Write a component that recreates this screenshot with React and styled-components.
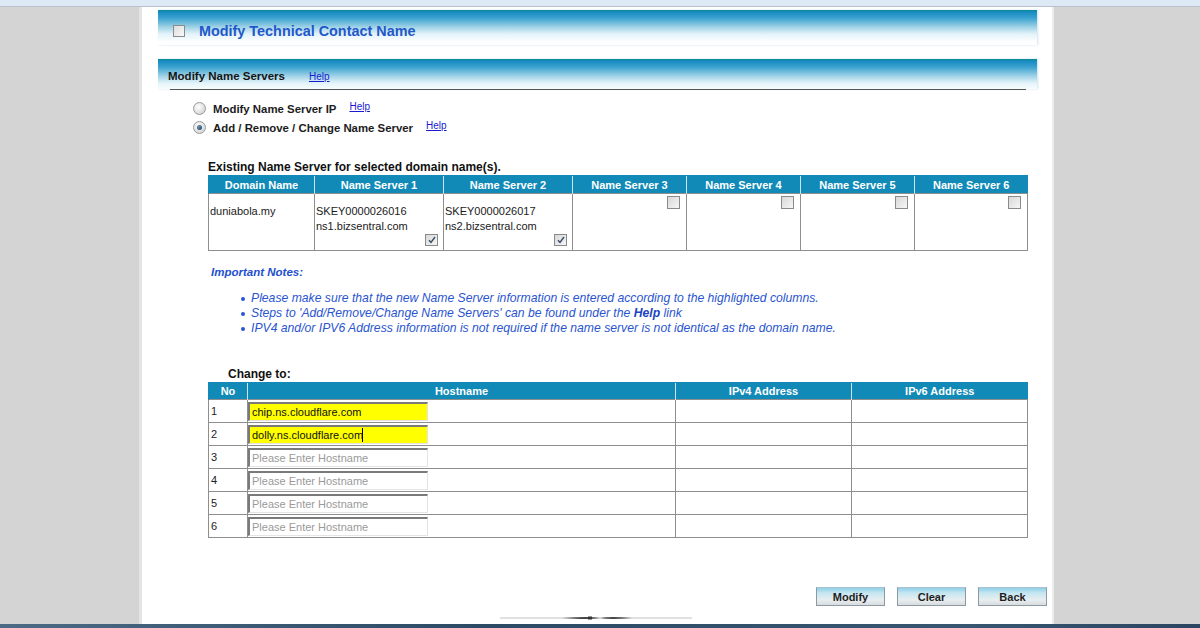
import styled, { createGlobalStyle } from "styled-components"

const GlobalStyle = createGlobalStyle`
  html, body {
    margin: 0;
    padding: 0;
    background: #d4d4d4;
    font-family: "Liberation Sans", Arial, sans-serif;
    font-size: 11px;
    color: #111;
  }
`

const existing = [
  { domain: "duniabola.my" },
]

const nsCols = [
  { title: "Name Server 1", lines: ["SKEY0000026016", "ns1.bizsentral.com"], checked: true },
  { title: "Name Server 2", lines: ["SKEY0000026017", "ns2.bizsentral.com"], checked: true },
  { title: "Name Server 3" },
  { title: "Name Server 4" },
  { title: "Name Server 5" },
  { title: "Name Server 6" },
]

const hosts = [
  { no: 1, value: "chip.ns.cloudflare.com" },
  { no: 2, value: "dolly.ns.cloudflare.com", caret: true },
  { no: 3 },
  { no: 4 },
  { no: 5 },
  { no: 6 },
]

function CheckMark() {
  return (
    <svg width="8" height="8" viewBox="0 0 8 8">
      <path d="M1 4.2 L3 6.5 L7 1" fill="none" stroke="#3a4a6a" strokeWidth="1.4" />
    </svg>
  )
}

function DecoLine() {
  return (
    <svg width="192" height="6" viewBox="0 0 192 6">
      <line x1="0" y1="3" x2="192" y2="3" stroke="#9a9a9a" strokeWidth="0.6" />
      <path d="M62 3 Q90 1.6 100 3 Q90 4.4 62 3 Z" fill="#111" />
      <path d="M100 3 Q110 1.6 132 3 Q110 4.4 100 3 Z" fill="#111" />
      <rect x="88" y="1.5" width="4" height="3" fill="#333" />
    </svg>
  )
}

export default function App() {
  return (
    <>
      <GlobalStyle />
      <TopStrip />
      <Main>
        <Side fixed />
        <Page>
          <Band1>
            <BoxCheck />
            <BandTitle>Modify Technical Contact Name</BandTitle>
          </Band1>
          <Band2>
            <SectionTitle>Modify Name Servers</SectionTitle>
            <HelpLink href="#">Help</HelpLink>
          </Band2>
          <Rule />

          <RadioGroup>
            <RadioRow>
              <Radio />
              <RadioLabel>Modify Name Server IP</RadioLabel>
              <HelpLink href="#" raised>Help</HelpLink>
            </RadioRow>
            <RadioRow>
              <Radio selected />
              <RadioLabel>Add / Remove / Change Name Server</RadioLabel>
              <HelpLink href="#" raised>Help</HelpLink>
            </RadioRow>
          </RadioGroup>

          <Content>
            <Caption>Existing Name Server for selected domain name(s).</Caption>
            <Grid>
              <colgroup>
                <col style={{ width: 106 }} />
                <col style={{ width: 129 }} />
                <col style={{ width: 129 }} />
                <col style={{ width: 114 }} />
                <col style={{ width: 114 }} />
                <col style={{ width: 114 }} />
                <col style={{ width: 113 }} />
              </colgroup>
              <thead>
                <tr>
                  <Th>Domain Name</Th>
                  {nsCols.map(c => (
                    <Th key={c.title}>{c.title}</Th>
                  ))}
                </tr>
              </thead>
              <tbody>
                {existing.map(row => (
                  <tr key={row.domain}>
                    <ServerCell>
                      <CellStack>
                        <div>{row.domain}</div>
                      </CellStack>
                    </ServerCell>
                    {nsCols.map(c => (
                      <ServerCell key={c.title}>
                        <CellStack>
                          {c.lines ? c.lines.map(l => <div key={l}>{l}</div>) : null}
                          <TickBox atBottom={!!c.lines}>{c.checked ? <CheckMark /> : null}</TickBox>
                        </CellStack>
                      </ServerCell>
                    ))}
                  </tr>
                ))}
              </tbody>
            </Grid>

            <NotesTitle>Important Notes:</NotesTitle>
            <Notes>
              <li>Please make sure that the new Name Server information is entered according to the highlighted columns.</li>
              <li>
                Steps to 'Add/Remove/Change Name Servers' can be found under the <b>Help</b> link
              </li>
              <li>IPV4 and/or IPV6 Address information is not required if the name server is not identical as the domain name.</li>
            </Notes>

            <ChangeTitle>Change to:</ChangeTitle>
            <Grid>
              <colgroup>
                <col style={{ width: 39 }} />
                <col style={{ width: 428 }} />
                <col style={{ width: 176 }} />
                <col style={{ width: 176 }} />
              </colgroup>
              <thead>
                <tr>
                  <Th compact>No</Th>
                  <Th compact>Hostname</Th>
                  <Th compact>IPv4 Address</Th>
                  <Th compact>IPv6 Address</Th>
                </tr>
              </thead>
              <tbody>
                {hosts.map(h => (
                  <tr key={h.no}>
                    <HostCell>{h.no}</HostCell>
                    <HostCell flush>
                      <InputWrap>
                        <HostInput
                          readOnly
                          filled={!!h.value}
                          value={h.value || ""}
                          placeholder="Please Enter Hostname"
                        />
                        {h.caret ? <Caret /> : null}
                      </InputWrap>
                    </HostCell>
                    <HostCell />
                    <HostCell />
                  </tr>
                ))}
              </tbody>
            </Grid>
          </Content>

          <Actions>
            <ActionButton>Modify</ActionButton>
            <ActionButton>Clear</ActionButton>
            <ActionButton>Back</ActionButton>
          </Actions>
          <Deco>
            <DecoLine />
          </Deco>
        </Page>
        <Side />
      </Main>
      <BottomStrip />
    </>
  )
}

const TopStrip = styled.div`
  height: 6px;
  background: #dde9f4;
  border-bottom: 1px solid #b8c2cc;
`

const Main = styled.div`
  display: flex;
  height: 617px;
`

const Side = styled.div`
  flex: ${({ fixed }) => (fixed ? "0 0 139px" : "1")};
  background: #d4d4d4;
`

const Page = styled.div`
  width: 910px;
  flex: none;
  background: #fff;
  border-left: 3px solid #e4e4e4;
  border-right: 2px solid #ececec;
  display: flex;
  flex-direction: column;
`

const BottomStrip = styled.div`
  height: 4px;
  background: linear-gradient(90deg, #4c6a86, #2c4a66 40%, #385672 80%, #2a4560);
`

const bandGradient = `
  linear-gradient(
    180deg,
    #0c8a8e 0px,
    #178bc2 2px,
    #3aa2cf 8px,
    #9fd2e6 17px,
    #e3f3f9 24px,
    #ffffff 32px
  )
`

const Band1 = styled.div`
  margin: 3px 15px 0 16px;
  height: 35px;
  background: ${bandGradient};
  display: flex;
  align-items: center;
  padding: 6px 0 0 15px;
  box-sizing: border-box;
  box-shadow: 1px 0 2px rgba(60, 140, 180, 0.25);
`

const BoxCheck = styled.span`
  width: 10px;
  height: 10px;
  border: 1px solid #8b8b8b;
  background: linear-gradient(135deg, #dcdcdc, #fafafa);
`

const BandTitle = styled.span`
  margin-left: 14px;
  font-size: 14.4px;
  font-weight: bold;
  color: #1f58c9;
`

const Band2 = styled.div`
  margin: 14px 15px 0 16px;
  height: 30px;
  background: ${bandGradient};
  display: flex;
  align-items: center;
  padding: 4px 0 0 10px;
  box-sizing: border-box;
  box-shadow: 1px 0 2px rgba(60, 140, 180, 0.25);
`

const SectionTitle = styled.span`
  font-size: 11.5px;
  font-weight: bold;
  color: #151515;
  margin-right: 24px;
`

const HelpLink = styled.a`
  font-size: 10px;
  color: #1a1ad0;
  text-decoration: underline;
  margin-left: ${({ raised }) => (raised ? "13px" : "0")};
  position: relative;
  top: ${({ raised }) => (raised ? "-2px" : "0")};
`

const Rule = styled.div`
  height: 1px;
  margin: 0 26px 0 28px;
  background: #555;
`

const RadioGroup = styled.div`
  margin: 9px 0 0 51px;
  display: flex;
  flex-direction: column;
`

const RadioRow = styled.div`
  height: 19px;
  display: flex;
  align-items: center;
`

const Radio = styled.span`
  width: 11px;
  height: 11px;
  border-radius: 50%;
  border: 1px solid #9a9a9a;
  background: radial-gradient(circle at 40% 35%, #ffffff, #d4d4d4 80%);
  position: relative;

  &::after {
    content: "";
    display: ${({ selected }) => (selected ? "block" : "none")};
    position: absolute;
    left: 3px;
    top: 3px;
    width: 5px;
    height: 5px;
    border-radius: 50%;
    background: radial-gradient(circle at 35% 35%, #6a8fb0, #1c3b5c);
  }
`

const RadioLabel = styled.span`
  margin-left: 7px;
  font-size: 11.4px;
  font-weight: bold;
  color: #1c1c1c;
`

const Content = styled.div`
  margin-left: 66px;
  width: 819px;
`

const Caption = styled.div`
  margin-top: 23px;
  line-height: 14px;
  font-size: 12px;
  font-weight: bold;
  color: #111;
  margin-bottom: 1px;
`

const Grid = styled.table`
  width: 819px;
  table-layout: fixed;
  border-collapse: collapse;
`

const Th = styled.th`
  height: ${({ compact }) => (compact ? "16px" : "17px")};
  padding: 0;
  background: #128ab8;
  color: #fff;
  font-size: 11px;
  font-weight: bold;
  text-align: center;
  border-left: 1px solid #c6e6f2;
  border-top: 1px solid #128ab8;

  &:first-child {
    border-left: 1px solid #128ab8;
  }
`

const ServerCell = styled.td`
  height: 56px;
  padding: 0;
  border: 1px solid #8e8e8e;
  vertical-align: top;
  font-size: 11px;
  line-height: 15px;
  color: #1a1a1a;
`

const CellStack = styled.div`
  height: 56px;
  padding: 2px 5px 4px 1px;
  box-sizing: border-box;
  display: flex;
  flex-direction: column;

  & > div:first-child {
    margin-top: 8px;
  }
`

const TickBox = styled.span`
  width: 11px;
  height: 11px;
  border: 1px solid #8a8a8a;
  background: linear-gradient(135deg, #d8d8d8, #f6f6f6);
  align-self: flex-end;
  display: flex;
  align-items: center;
  justify-content: center;
  margin-top: ${({ atBottom }) => (atBottom ? "auto" : "0")};
  margin-right: ${({ atBottom }) => (atBottom ? "0" : "1px")};
`

const NotesTitle = styled.div`
  margin: 14px 0 0 3px;
  line-height: 14px;
  font-size: 11.5px;
  font-weight: bold;
  font-style: italic;
  color: #2250cf;
`

const Notes = styled.ul`
  margin: 12px 0 0 0;
  padding: 0 0 0 43px;
  list-style: none;
  font-size: 12.2px;
  font-style: italic;
  line-height: 15px;
  color: #2a55d0;

  li {
    position: relative;
  }

  li::before {
    content: "";
    position: absolute;
    left: -10px;
    top: 6px;
    width: 4px;
    height: 4px;
    border-radius: 50%;
    background: #2a55d0;
  }

  b {
    font-weight: bold;
    color: #1c44c0;
  }
`

const ChangeTitle = styled.div`
  margin: 31px 0 1px 20px;
  line-height: 14px;
  font-size: 12px;
  font-weight: bold;
  color: #111;
`

const HostCell = styled.td`
  height: 22px;
  padding: 0 0 0 2px;
  border: 1px solid #8e8e8e;
  font-size: 11px;
  color: #222;
  vertical-align: middle;

  ${({ flush }) => flush && "padding: 0;"}
`

const InputWrap = styled.div`
  position: relative;
  width: 180px;
  height: 19px;
`

const HostInput = styled.input`
  width: 180px;
  height: 19px;
  box-sizing: border-box;
  margin: 0;
  padding: 0 0 0 2px;
  border-top: 2px solid #7a7a7a;
  border-left: 2px solid #7a7a7a;
  border-right: 1px solid #e4e4e4;
  border-bottom: 1px solid #e4e4e4;
  background: ${({ filled }) => (filled ? "#ffff00" : "#fff")};
  font-family: "Liberation Sans", Arial, sans-serif;
  font-size: 11px;
  color: #111;
  outline: none;

  &::placeholder {
    color: #9a9a9a;
  }
`

const Caret = styled.span`
  position: absolute;
  left: 114px;
  top: 3px;
  width: 1px;
  height: 14px;
  background: #000;
`

const Actions = styled.div`
  margin: 49px 5px 0 0;
  display: flex;
  justify-content: flex-end;
  gap: 12px;
`

const ActionButton = styled.button`
  width: 69px;
  height: 19px;
  padding: 0;
  border: 1px solid #8d9aa3;
  border-top-color: #a9c4d0;
  background: linear-gradient(180deg, #8fd0e8 0%, #c6e6f1 30%, #e8eef0 70%, #d8dcde 100%);
  font-family: "Liberation Sans", Arial, sans-serif;
  font-size: 11px;
  font-weight: bold;
  color: #1e1e1e;
`

const Deco = styled.div`
  margin: 9px 0 0 358px;
  height: 6px;
  line-height: 0;
`
